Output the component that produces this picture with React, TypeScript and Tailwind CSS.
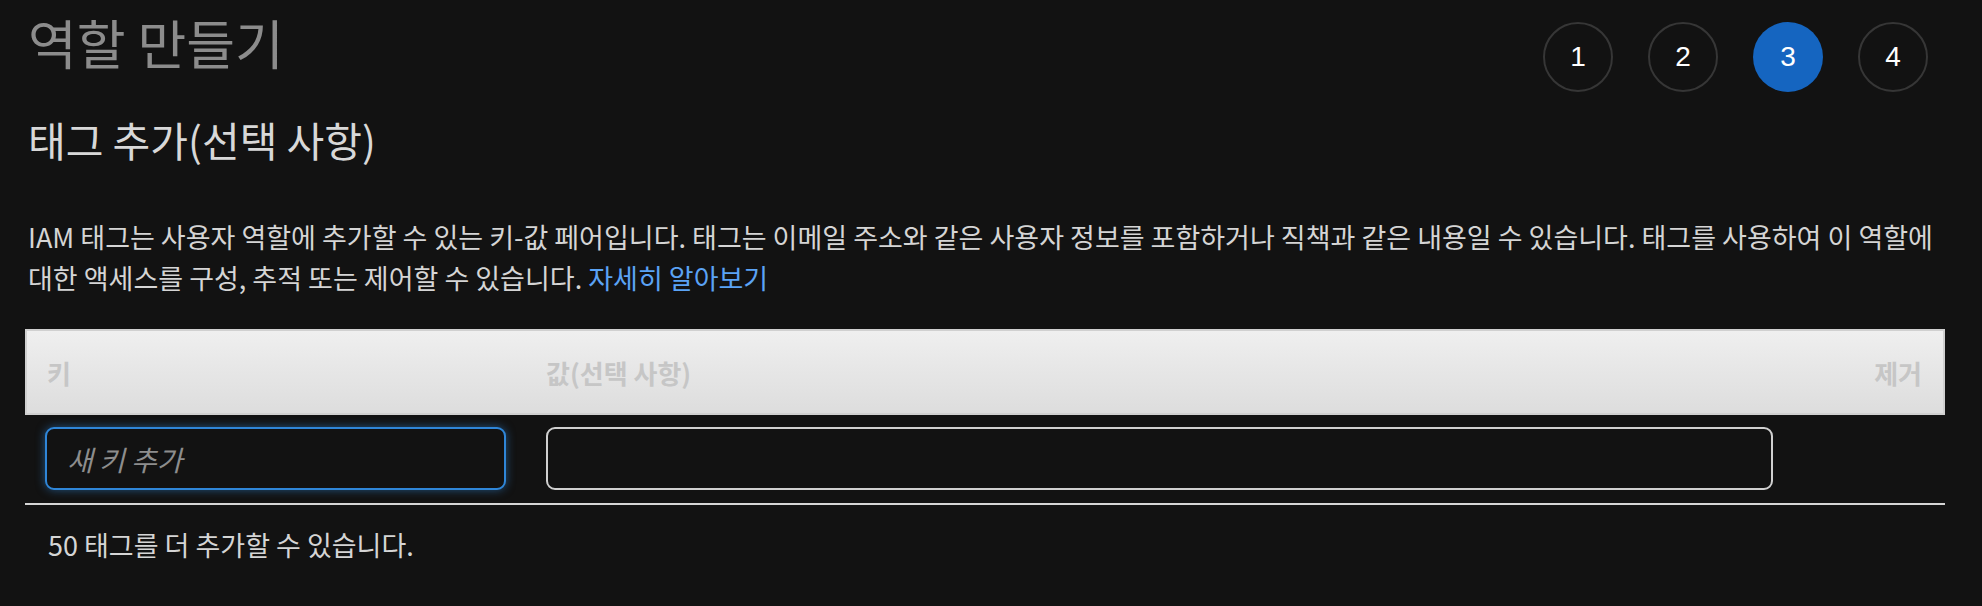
const steps = [1, 2, 3, 4]
const current = 3

export default function App() {
  return (
    <main className="min-h-screen bg-[#121212] pl-[25px] pr-[37px] font-['Noto_Sans_CJK_KR','Noto_Sans',sans-serif] text-[#d5d5d5]">
      <div className="flex items-start justify-between">
        <h1 className="pl-[3px] text-[53px] leading-[84px] font-normal text-[#8c8c8c]">역할 만들기</h1>
        <ol className="mt-[22px] mr-[17px] flex gap-[35px]">
          {steps.map((n) => (
            <li
              key={n}
              className={
                n === current
                  ? 'flex h-[70px] w-[70px] items-center justify-center rounded-full bg-[#1565c0] font-["Liberation_Sans",sans-serif] text-[28px] text-white'
                  : 'flex h-[70px] w-[70px] items-center justify-center rounded-full border-2 border-[#363636] font-["Liberation_Sans",sans-serif] text-[28px] text-white'
              }
            >
              {n}
            </li>
          ))}
        </ol>
      </div>

      <h2 className="mt-[27px] pl-[3px] text-[41px] leading-[40px] font-normal text-[#d8d8d8]">태그 추가(선택 사항)</h2>

      <p className="mt-[57px] mr-[-20px] pl-[3px] text-[27px] leading-[41px] break-keep">
        IAM 태그는 사용자 역할에 추가할 수 있는 키-값 페어입니다. 태그는 이메일 주소와 같은 사용자 정보를 포함하거나 직책과 같은 내용일 수
        있습니다. 태그를 사용하여 이 역할에 대한 액세스를 구성, 추적 또는 제어할 수 있습니다.{' '}
        <a href="#" className="text-[#5ba3f5]">자세히 알아보기</a>
      </p>

      <div className="mt-[31px]">
        <div className="grid h-[86px] grid-cols-[501px_1fr_152px] items-center border-2 border-[#d0d0d0] bg-gradient-to-b from-[#efefef] to-[#dddddd] text-[26px] font-bold text-[#c6c6c6]">
          <div className="pl-[20px]">키</div>
          <div className="pl-[18px]">값(선택 사항)</div>
          <div className="pr-[21px] text-right">제거</div>
        </div>
        <div className="grid grid-cols-[501px_1fr_152px] pt-[12px] pb-[13px]">
          <div className="px-[20px]">
            <input
              placeholder="새 키 추가"
              className="h-[63px] w-full rounded-[9px] border-2 border-[#2f86d8] bg-[#121212] px-[20px] text-[28px] italic text-white shadow-[0_0_10px_rgba(47,134,216,0.55)] outline-none placeholder:text-[#8d8d8d]"
            />
          </div>
          <div className="px-[20px]">
            <input className="h-[63px] w-full rounded-[9px] border-2 border-[#d0d0d0] bg-[#121212] px-[20px] text-[28px] text-white outline-none" />
          </div>
          <div />
        </div>
        <div className="h-[2px] bg-[#d5d5d5]" />
      </div>

      <p className="mt-[20px] pl-[23px] text-[27px] leading-[40px]">50 태그를 더 추가할 수 있습니다.</p>
    </main>
  )
}
